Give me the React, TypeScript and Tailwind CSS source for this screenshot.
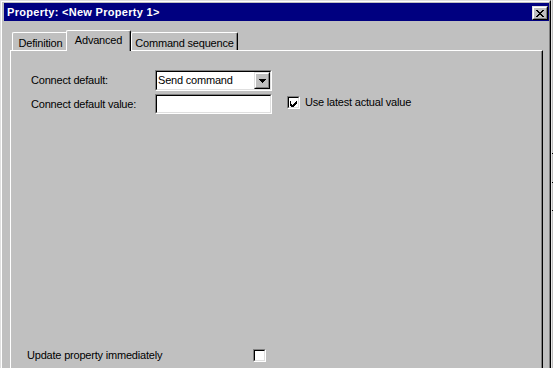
import React from "react";

function Raised({ className = "", children }: { className?: string; children?: React.ReactNode }) {
  return (
    <div className={`border border-t-[#dfdfdf] border-l-[#dfdfdf] border-r-black border-b-black ${className}`}>
      <div className="w-full h-full border border-t-white border-l-white border-r-[#808080] border-b-[#808080] bg-[#c0c0c0] flex items-center justify-center">
        {children}
      </div>
    </div>
  );
}

function Sunken({ className = "", children }: { className?: string; children?: React.ReactNode }) {
  return (
    <div className={`border border-t-[#808080] border-l-[#808080] border-r-white border-b-white ${className}`}>
      <div className="w-full h-full border border-t-black border-l-black border-r-[#dfdfdf] border-b-[#dfdfdf] bg-white flex items-center">
        {children}
      </div>
    </div>
  );
}

function Check({ checked }: { checked?: boolean }) {
  return (
    <Sunken className="w-[13px] h-[13px] shrink-0">
      {checked && (
        <svg width="9" height="9" viewBox="0 0 9 9" className="block" shapeRendering="crispEdges">
          <path d="M1 3h1v3h1v1h1v-1h1v-1h1v-1h1v-1h1v3h-1v1h-1v1h-1v1h-1v1h-1v-1h-1v-1h-1z" fill="black" />
        </svg>
      )}
    </Sunken>
  );
}

export default function App() {
  return (
    <div className="w-[553px] h-[368px] overflow-hidden flex bg-[#c0c0c0] font-['Liberation_Sans',Arial,sans-serif] text-[11px] tracking-[-0.2px] text-black">
      <div className="w-[551px] h-[400px] shrink-0 border border-t-[#dfdfdf] border-l-[#dfdfdf] border-r-black border-b-black">
        <div className="w-full h-full border border-t-white border-l-white border-r-[#808080] border-b-[#808080] pl-[2px] pt-[1px] flex flex-col">
          {/* Title bar */}
          <div className="h-[18px] bg-[#000080] flex items-start justify-between pl-[3px] pr-[1px] shrink-0">
            <span className="text-white font-bold leading-[18px] text-[11px] tracking-[0.3px]">Property: &lt;New Property 1&gt;</span>
            <Raised className="w-[16px] h-[14px] mt-[3px]">
              <svg width="8" height="7" viewBox="0 0 8 7" shapeRendering="crispEdges" className="block">
                <path d="M0 0h2v1h1v1h2v-1h1v-1h2v1h-1v1h-1v1h-1v1h1v1h1v1h1v1h-2v-1h-1v-1h-2v1h-1v1h-2v-1h1v-1h1v-1h1v-1h-1v-1h-1v-1h-1z" fill="black" />
              </svg>
            </Raised>
          </div>

          {/* Body */}
          <div className="px-[6px] flex flex-col flex-1">
            {/* Tabs */}
            <div className="mt-[9px] h-[20px] flex items-end relative z-10">
              <div className="ml-[2px] w-[56px] h-[18px] border-l border-t border-white rounded-tl-[2px] flex items-center justify-center leading-[16px] pt-[2px]">
                Definition
              </div>
              <div className="ml-[-2px] w-[65px] h-[21px] mb-[-1px] bg-[#c0c0c0] border-l border-t border-t-white border-l-white border-r border-r-black shadow-[inset_-1px_0_#808080] rounded-t-[2px] flex items-start justify-center pt-[2px] leading-[14px] relative z-10">
                Advanced
              </div>
              <div className="w-[107px] h-[18px] border-t border-l border-t-white border-l-white border-r border-r-black shadow-[inset_-1px_0_#808080] rounded-t-[2px] flex items-center justify-center leading-[16px] pt-[2px]">
                Command sequence
              </div>
            </div>

            {/* Panel */}
            <div className="flex-1 border-t border-l border-t-white border-l-white border-r border-r-black shadow-[inset_-1px_0_#808080] pl-[20px] pt-[19px] flex flex-col">
              <div className="flex items-center h-[21px]">
                <span className="w-[124px] shrink-0">Connect default:</span>
                <Sunken className="w-[117px] h-[21px] shrink-0">
                  <span className="flex-1 pl-[1px] leading-[17px]">Send command</span>
                  <Raised className="w-[16px] h-[17px] shrink-0">
                    <svg width="7" height="4" viewBox="0 0 7 4" shapeRendering="crispEdges" className="block">
                      <path d="M0 0h7v1h-1v1h-1v1h-1v1h-1v-1h-1v-1h-1v-1h-1z" fill="black" />
                    </svg>
                  </Raised>
                </Sunken>
              </div>
              <div className="flex items-start mt-[3px]">
                <span className="w-[124px] shrink-0 leading-[20px]">Connect default value:</span>
                <Sunken className="w-[117px] h-[20px] shrink-0" />
                <div className="ml-[15px] mt-[2px] flex items-center">
                  <Check checked />
                  <span className="ml-[5px] leading-[13px]">Use latest actual value</span>
                </div>
              </div>

              <div className="mt-[235px] ml-[-4px] flex items-center h-[13px]">
                <span className="w-[226px] shrink-0 leading-[13px]">Update property immediately</span>
                <Check />
              </div>
            </div>
          </div>
        </div>
      </div>
      <div className="w-[2px] h-full bg-[#c0c0c0] border-l border-l-[#e8e8e8] flex flex-col">
        <div className="h-[153px]" />
        <div className="h-[1px] bg-black" />
        <div className="h-[28px]" />
        <div className="h-[1px] bg-black" />
        <div className="h-[27px]" />
        <div className="h-[1px] bg-black" />
      </div>
    </div>
  );
}
